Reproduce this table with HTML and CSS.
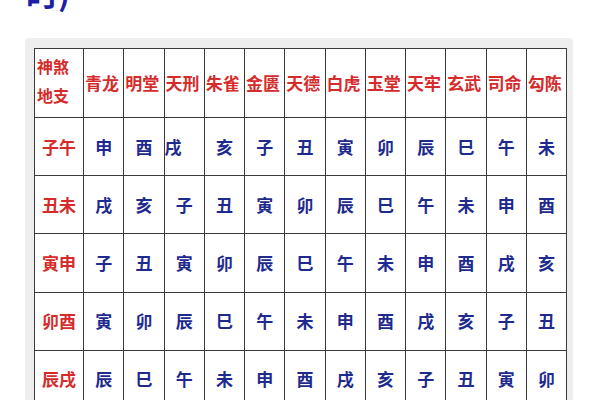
FILE: index.html
```html
<!DOCTYPE html>
<html lang="zh">
<head>
<meta charset="utf-8">
<link rel="stylesheet" href="styles.css">
</head>
<body>
<div class="title">时)</div>
<div class="frame">
<table class="grid">
<colgroup><col class="c0"><col span="12" class="cn"></colgroup>
<tr class="head">
<th class="corner">神煞<br>地支</th>
<th>青龙</th><th>明堂</th><th>天刑</th><th>朱雀</th><th>金匮</th><th>天德</th><th>白虎</th><th>玉堂</th><th>天牢</th><th>玄武</th><th>司命</th><th>勾陈</th>
</tr>
<tr><th class="rh">子午</th><td>申</td><td>酉</td><td class="left">戌</td><td>亥</td><td>子</td><td>丑</td><td>寅</td><td>卯</td><td>辰</td><td>巳</td><td>午</td><td>未</td></tr>
<tr><th class="rh">丑未</th><td>戌</td><td>亥</td><td>子</td><td>丑</td><td>寅</td><td>卯</td><td>辰</td><td>巳</td><td>午</td><td>未</td><td>申</td><td>酉</td></tr>
<tr><th class="rh">寅申</th><td>子</td><td>丑</td><td>寅</td><td>卯</td><td>辰</td><td>巳</td><td>午</td><td>未</td><td>申</td><td>酉</td><td>戌</td><td>亥</td></tr>
<tr><th class="rh">卯酉</th><td>寅</td><td>卯</td><td>辰</td><td>巳</td><td>午</td><td>未</td><td>申</td><td>酉</td><td>戌</td><td>亥</td><td>子</td><td>丑</td></tr>
<tr><th class="rh">辰戌</th><td>辰</td><td>巳</td><td>午</td><td>未</td><td>申</td><td>酉</td><td>戌</td><td>亥</td><td>子</td><td>丑</td><td>寅</td><td>卯</td></tr>
</table>
</div>
</body>
</html>
```

FILE: styles.css
```css
html, body {
  margin: 0;
  padding: 0;
  background: #ffffff;
  overflow: hidden;
}
body {
  font-family: "Noto Sans CJK SC", "Noto Sans", sans-serif;
}
.title {
  margin: -27px 0 27px 26px;
  height: 38px;
  font-size: 32px;
  line-height: 38px;
  font-weight: 700;
  color: #1f1fa6;
}
.frame {
  margin-left: 25px;
  width: 548px;
  box-sizing: border-box;
  padding: 10px 7px 0 9px;
  background: #eeeeee;
  border-radius: 4px 4px 0 0;
}
.grid {
  width: 532px;
  border-collapse: collapse;
  table-layout: fixed;
  background: #ffffff;
}
.c0 { width: 49px; }
.cn { width: 40.25px; }
.grid th, .grid td {
  border: 1.5px solid #3a3a3a;
  padding: 0;
  font-size: 17px;
  line-height: 20px;
}
.head th {
  height: 63px;
  color: #d62b2b;
  font-weight: 700;
  text-align: left;
  padding-left: 1px;
  vertical-align: middle;
  white-space: nowrap;
}
.head th.corner {
  font-size: 16px;
  line-height: 29px;
  padding: 0 0 5px 2px;
}
.grid td, .rh {
  height: 57.2px;
  text-align: center;
  vertical-align: middle;
}
.grid td {
  color: #1e2a8e;
  font-weight: 700;
}
.rh {
  color: #d62b2b;
  font-weight: 700;
}
.grid td.left {
  text-align: left;
}
```
